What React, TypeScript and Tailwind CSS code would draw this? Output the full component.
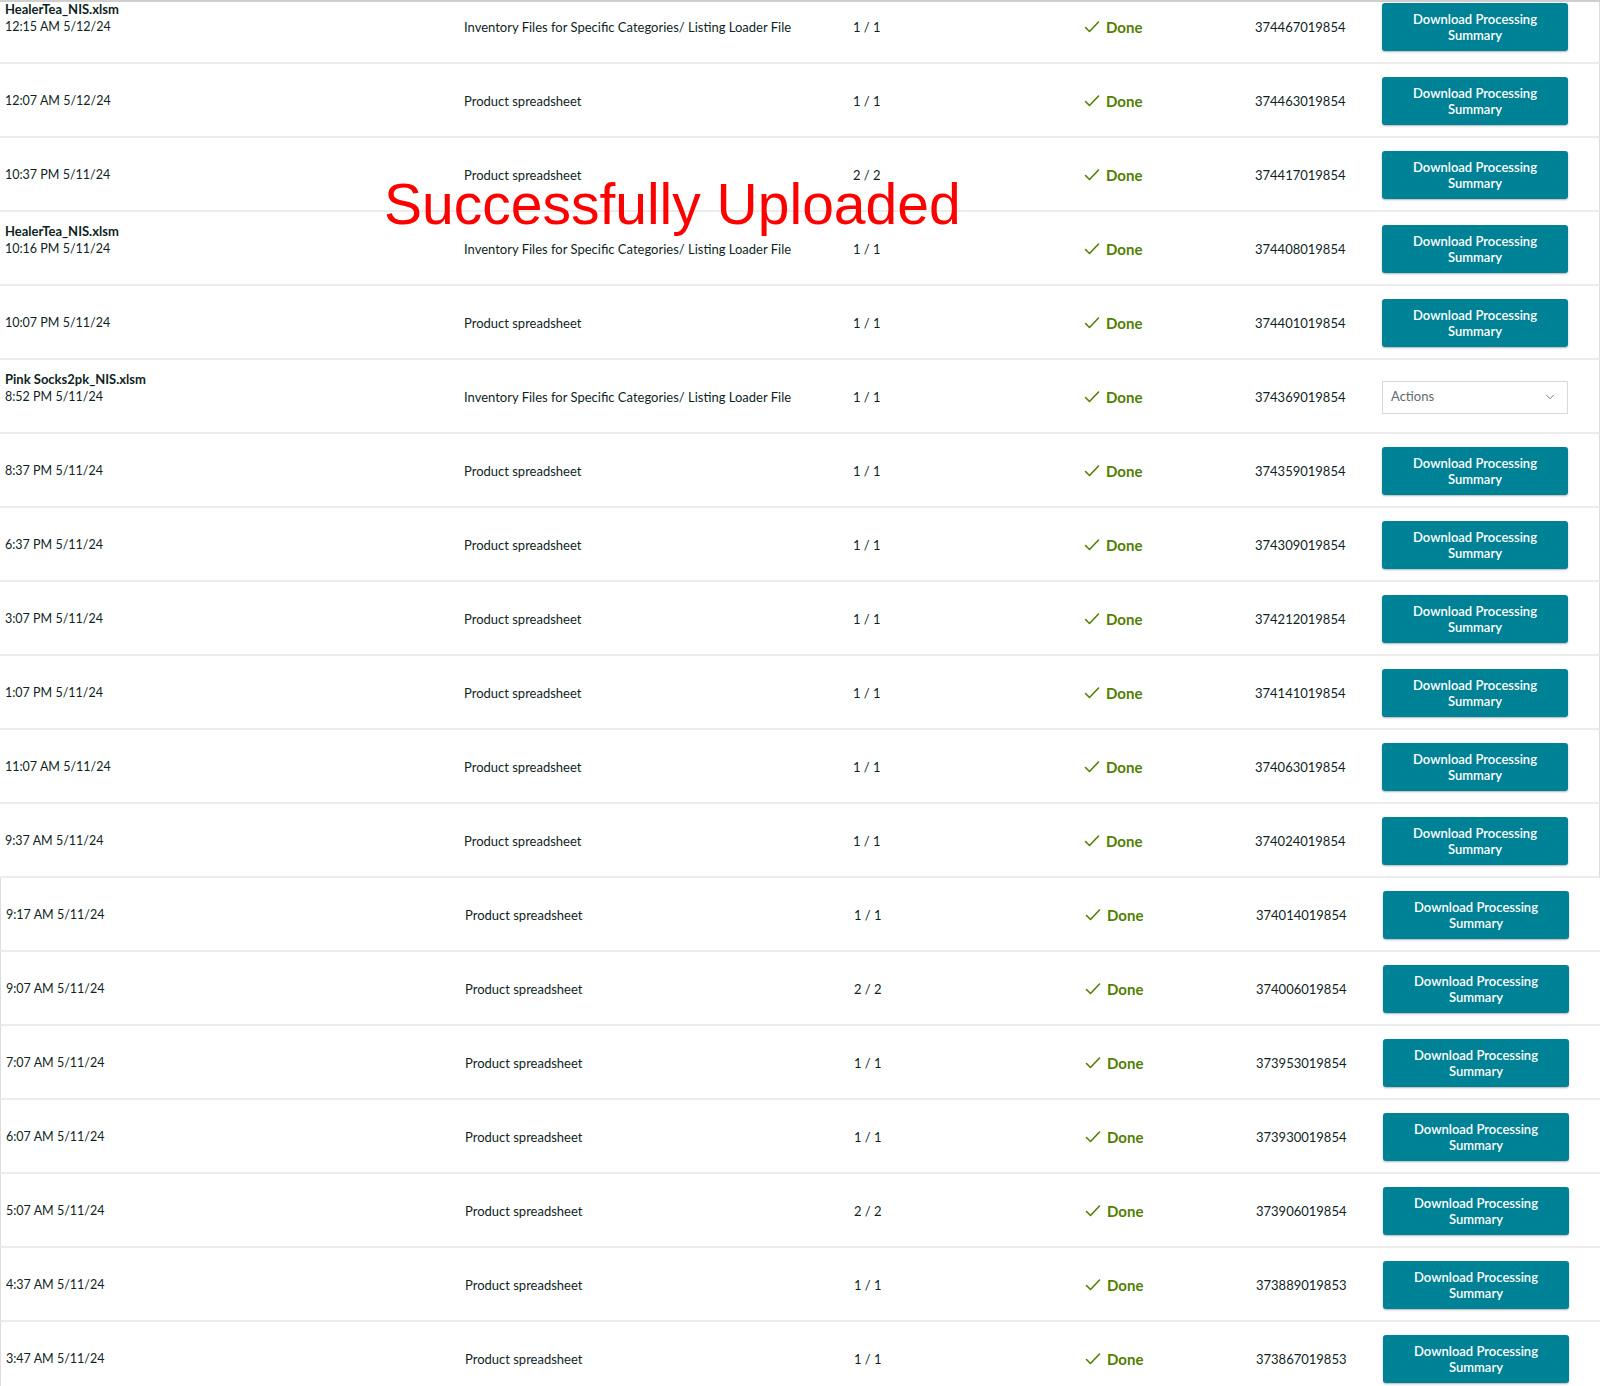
import React from "react";
import { ChevronDown } from "lucide-react";

type Upload = {
  fileName?: string;
  date: string;
  type: "product" | "inventory";
  count: string;
  batchId: string;
  actions?: boolean;
};

const uploads: Upload[] = [
  { fileName: "HealerTea_NIS.xlsm", date: "12:15 AM 5/12/24", type: "inventory", count: "1 / 1", batchId: "374467019854" },
  { date: "12:07 AM 5/12/24", type: "product", count: "1 / 1", batchId: "374463019854" },
  { date: "10:37 PM 5/11/24", type: "product", count: "2 / 2", batchId: "374417019854" },
  { fileName: "HealerTea_NIS.xlsm", date: "10:16 PM 5/11/24", type: "inventory", count: "1 / 1", batchId: "374408019854" },
  { date: "10:07 PM 5/11/24", type: "product", count: "1 / 1", batchId: "374401019854" },
  { fileName: "Pink Socks2pk_NIS.xlsm", date: "8:52 PM 5/11/24", type: "inventory", count: "1 / 1", batchId: "374369019854", actions: true },
  { date: "8:37 PM 5/11/24", type: "product", count: "1 / 1", batchId: "374359019854" },
  { date: "6:37 PM 5/11/24", type: "product", count: "1 / 1", batchId: "374309019854" },
  { date: "3:07 PM 5/11/24", type: "product", count: "1 / 1", batchId: "374212019854" },
  { date: "1:07 PM 5/11/24", type: "product", count: "1 / 1", batchId: "374141019854" },
  { date: "11:07 AM 5/11/24", type: "product", count: "1 / 1", batchId: "374063019854" },
  { date: "9:37 AM 5/11/24", type: "product", count: "1 / 1", batchId: "374024019854" },
  { date: "9:17 AM 5/11/24", type: "product", count: "1 / 1", batchId: "374014019854" },
  { date: "9:07 AM 5/11/24", type: "product", count: "2 / 2", batchId: "374006019854" },
  { date: "7:07 AM 5/11/24", type: "product", count: "1 / 1", batchId: "373953019854" },
  { date: "6:07 AM 5/11/24", type: "product", count: "1 / 1", batchId: "373930019854" },
  { date: "5:07 AM 5/11/24", type: "product", count: "2 / 2", batchId: "373906019854" },
  { date: "4:37 AM 5/11/24", type: "product", count: "1 / 1", batchId: "373889019853" },
  { date: "3:47 AM 5/11/24", type: "product", count: "1 / 1", batchId: "373867019853" },
];

const typeLabel = {
  product: "Product spreadsheet",
  inventory: "Inventory Files for Specific Categories/ Listing Loader File",
};

const CheckIcon = () => (
  <svg width="16" height="14" viewBox="0 0 16 14" fill="none">
    <path d="M1.5 7.5 L5.5 11.5 L14.5 2" stroke="#538000" strokeWidth="1.6" strokeLinecap="round" strokeLinejoin="round" />
  </svg>
);

const UploadRow = ({ upload, index }: { upload: Upload; index: number }) => {
  // the capture was stitched: upper half shows a right edge, lower half a left edge
  const edge = index < 12 ? "border-r border-r-[#dcdcdc]" : "border-l border-l-[#dcdcdc]";

  return (
    <div
      className={`grid h-[74px] grid-cols-[459px_389px_231px_171px_127px_186px_1fr] items-center border-b-2 border-b-[#ececec] pl-[5px] pt-[2px] ${edge}`}
    >
      {/* date column, file name sits above the date */}
      <div className="flex flex-col justify-center">
        {upload.fileName && (
          <div className="-mt-[18px] text-[13px] font-bold leading-[18px] text-[#0f1f24]">{upload.fileName}</div>
        )}
        <div className="text-[12.5px] leading-[18px] text-[#0f1f24]">{upload.date}</div>
      </div>

      <div className="text-[13px] leading-[18px] text-[#0f1f24]">{typeLabel[upload.type]}</div>
      <div className="text-[13px] leading-[18px] text-[#0f1f24]">{upload.count}</div>

      <div className="flex items-center gap-[6px]">
        <CheckIcon />
        <span className="text-[15px] font-bold leading-[18px] text-[#538000]">Done</span>
      </div>

      <div className="text-[13px] leading-[18px] text-[#0f1f24]">{upload.batchId}</div>

      {upload.actions ? (
        <div className="flex h-[33px] items-center justify-between border border-[#d5d9d9] bg-white pl-[8px] pr-[10px]">
          <span className="text-[13px] text-[#5f6b6d]">Actions</span>
          <ChevronDown className="h-[14px] w-[14px] text-[#6b7778]" strokeWidth={1.6} />
        </div>
      ) : (
        <button className="flex h-[48px] flex-col items-center justify-center rounded-[3px] bg-[#008296] text-[13px] font-semibold leading-[16px] text-white shadow-[0_1px_2px_rgba(0,0,0,0.3)]">
          <span>Download Processing</span>
          <span>Summary</span>
        </button>
      )}
      <div />
    </div>
  );
};

export default function App() {
  return (
    <div className="relative h-[1386px] w-[1600px] overflow-hidden border-t-2 border-t-[#cfcfcf] bg-white font-['Lato',sans-serif]">
      <div className="-mt-[12px]">
        {uploads.map((upload, i) => (
          <UploadRow key={upload.batchId} upload={upload} index={i} />
        ))}
      </div>

      {/* annotation stamped on top of the screenshot */}
      <div className="absolute left-[384px] top-[174px] font-['Liberation_Sans',Arial,sans-serif] text-[57px] leading-none text-[#ff0000]">
        Successfully Uploaded
      </div>
    </div>
  );
}
